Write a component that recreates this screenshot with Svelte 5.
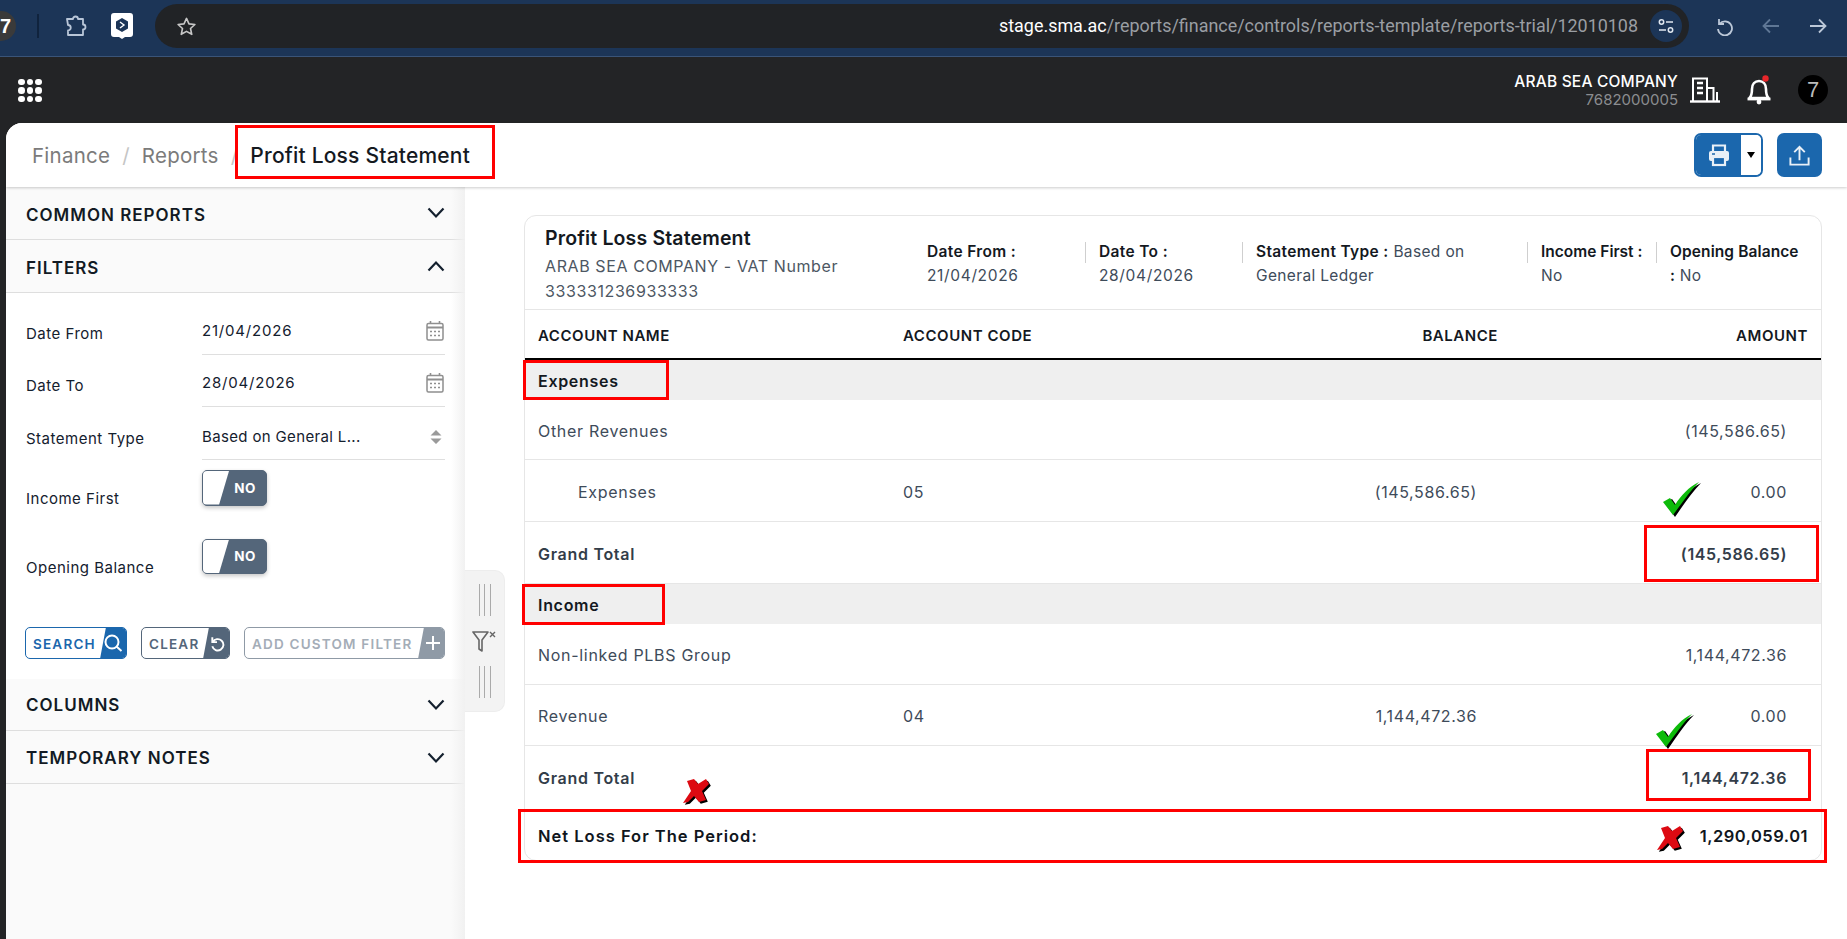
<script>
  const rows1 = [
    { name: 'Other Revenues', code: '', bal: '', amt: '(145,586.65)', h: 'r60' },
    { name: 'Expenses', code: '05', bal: '(145,586.65)', amt: '0.00', h: 'r62', indent: true }
  ];
  const rows2 = [
    { name: 'Non-linked PLBS Group', code: '', bal: '', amt: '1,144,472.36', h: 'r61' },
    { name: 'Revenue', code: '04', bal: '1,144,472.36', amt: '0.00', h: 'r61' }
  ];
  const marks = [
    { x: 235, y: 125, w: 260, h: 54 },
    { x: 523, y: 360, w: 146, h: 40 },
    { x: 1644, y: 525, w: 175, h: 57 },
    { x: 522, y: 584, w: 143, h: 41 },
    { x: 1646, y: 749, w: 165, h: 52 },
    { x: 518, y: 809, w: 1309, h: 54 }
  ];
  const checks = [{ x: 1663, y: 482 }, { x: 1656, y: 714 }];
  const crosses = [{ x: 683, y: 779 }, { x: 1657, y: 826 }];
  const dots = [0, 1, 2];
</script>

{#snippet chev(up)}
  <svg class="chev" viewBox="0 0 18 12" width="18" height="12"><path d={up ? 'M1.500 10.500 9 2.500l7.500 8' : 'M1.500 1.500 9 9.500l7.500-8'} fill="none" stroke="#14202e" stroke-width="2.200"/></svg>
{/snippet}

{#snippet cal()}
  <svg viewBox="0 0 18 20" width="18" height="20"><path d="M4.500 0v3M13.500 0v3" stroke="#8f8f8f" stroke-width="1.600"/><rect x="1" y="2.500" width="16" height="16.500" rx="1.500" fill="none" stroke="#8f8f8f" stroke-width="1.500"/><path d="M1 6.500h16" stroke="#8f8f8f" stroke-width="2"/><path d="M4 10.500h2M8 10.500h2M12 10.500h2M4 14.500h2M8 14.500h2M12 14.500h2" stroke="#8f8f8f" stroke-width="1.600"/></svg>
{/snippet}

{#snippet section(title, up, low)}
  <div class="acc" class:low><span>{title}</span>{@render chev(up)}</div>
{/snippet}

{#snippet toggle()}
  <div class="toggle"><i></i><b>NO</b></div>
{/snippet}

{#snippet row(r)}
  <div class="row {r.h}">
    <span class:indent={r.indent}>{r.name}</span><span>{r.code}</span><span class="num">{r.bal}</span><span class="num">{r.amt}</span>
  </div>
{/snippet}

<div class="app">
  <header class="chrome">
    <div class="chip">7</div>
    <div class="sep"></div>
    <svg class="ext" viewBox="0 0 24 24" width="24" height="24"><path d="M4 4h6a2.500 2.500 0 0 1 5 0h5v5.500a2.500 2.500 0 0 1 0 5V20H5v-4.500a2.500 2.500 0 0 0 0-5.500z" transform="translate(0 1)" fill="none" stroke="#b9c6d8" stroke-width="1.800" stroke-linejoin="round"/></svg>
    <svg class="logo" viewBox="0 0 22 26" width="22" height="26"><path d="M3 0h16a3 3 0 0 1 3 3v18a3 3 0 0 1-3 3h-5l-3 2-3-2H3a3 3 0 0 1-3-3V3a3 3 0 0 1 3-3z" fill="#fff"/><path d="M11 5l6 3.500v7L11 19l-6-3.500v-7z" fill="#1c3557"/><path d="M9 9l4 3-4 3" fill="none" stroke="#fff" stroke-width="1.400"/></svg>
    <div class="pill">
      <svg class="star" viewBox="0 0 22 22" width="21" height="21"><path d="M11 2.500l2.600 5.700 6.200.7-4.600 4.200 1.300 6.100L11 16.100l-5.500 3.100 1.300-6.100-4.600-4.200 6.200-.7z" fill="none" stroke="#c7c7c7" stroke-width="1.700" stroke-linejoin="round"/></svg>
      <div class="url"><span class="host">stage.sma.ac</span><span class="path">/reports/finance/controls/reports-template/reports-trial/12010108</span></div>
      <div class="tune"><svg viewBox="0 0 18 18" width="18" height="18"><circle cx="4.500" cy="5" r="2.200" fill="none" stroke="#dfe6ef" stroke-width="1.500"/><path d="M9 5h7M2 13h7" stroke="#dfe6ef" stroke-width="1.500"/><circle cx="13.500" cy="13" r="2.200" fill="none" stroke="#dfe6ef" stroke-width="1.500"/></svg></div>
    </div>
    <div class="navbtns">
      <svg viewBox="0 0 20 20" width="20" height="20"><path d="M5 3v5h5M5.500 8A7 7 0 1 1 4 13" fill="none" stroke="#bcc8d8" stroke-width="1.800"/></svg>
      <svg viewBox="0 0 20 20" width="20" height="20"><path d="M18 10H3M9 3.500 2.500 10 9 16.500" fill="none" stroke="#5f7795" stroke-width="1.800"/></svg>
      <svg viewBox="0 0 20 20" width="20" height="20"><path d="M2 10h15M11 3.500l6.500 6.500-6.500 6.500" fill="none" stroke="#bcc8d8" stroke-width="1.800"/></svg>
    </div>
  </header>

  <nav class="topnav">
    <div class="apps">{#each dots as a}{#each dots as b}<i></i>{/each}{/each}</div>
    <div class="user">
      <div class="co"><strong>ARAB SEA COMPANY</strong><small>7682000005</small></div>
      <svg class="bld" viewBox="0 0 30 26" width="30" height="26"><path d="M3 24V1.500h14V24M17 11h6.500v13M27 15v9" fill="none" stroke="#fff" stroke-width="2"/><path d="M0 24.500h30" stroke="#fff" stroke-width="2.400"/><path d="M7 6h6M7 11h6M7 16h6" stroke="#fff" stroke-width="2.400"/></svg>
      <svg class="bell" viewBox="0 0 26 30" width="26" height="30"><path d="M3.500 23c2.500-2.500 2.500-5 2.500-9 0-5 3-8 7-8s7 3 7 8c0 4 0 6.500 2.500 9z" fill="none" stroke="#fff" stroke-width="2.600" stroke-linejoin="round"/><path d="M1.500 24h23" stroke="#fff" stroke-width="2.800"/><circle cx="13" cy="27" r="2.400" fill="#fff"/><circle cx="19.500" cy="3.500" r="3.200" fill="#e8262a"/></svg>
      <div class="avatar">7</div>
    </div>
  </nav>

  <div class="shell">
    <div class="crumbs">
      <div class="trail"><span>Finance</span><em>/</em><span>Reports</span><em>/</em><strong>Profit Loss Statement</strong></div>
      <div class="actions">
        <div class="print">
          <div class="pa"><svg viewBox="0 0 24 24" width="24" height="24"><path d="M6 8V2.500h12V8" fill="none" stroke="#e9f0f7" stroke-width="2.200"/><rect x="2" y="8" width="20" height="10" rx="2" fill="#e9f0f7"/><rect x="6" y="14" width="12" height="8" fill="#1b67ad" stroke="#e9f0f7" stroke-width="2.200"/><path d="M5 11h3" stroke="#1b67ad" stroke-width="1.600"/></svg></div>
          <div class="pb"><i></i></div>
        </div>
        <div class="upload"><svg viewBox="0 0 24 24" width="23" height="25"><path d="M12 17V3M6.500 8.500 12 3l5.500 5.500M2.500 14v7.500h19V14" fill="none" stroke="#e9f0f7" stroke-width="2"/></svg></div>
      </div>
    </div>

    <div class="body">
      <aside>
        {@render section('COMMON REPORTS', false, false)}
        {@render section('FILTERS', true, false)}
        <div class="form">
          <div class="field"><label>Date From</label><div class="val date"><span>21/04/2026</span>{@render cal()}</div></div>
          <div class="field"><label>Date To</label><div class="val date"><span>28/04/2026</span>{@render cal()}</div></div>
          <div class="field tall"><label>Statement Type</label><div class="val"><span>Based on General L...</span><svg class="sort" viewBox="0 0 12 14" width="12" height="14"><path d="M6 0l5.500 5.500H.5zM6 14 .5 8.500h11z" fill="#9a9a9a"/></svg></div></div>
          <div class="tfield"><label>Income First</label>{@render toggle()}</div>
          <div class="tfield"><label>Opening Balance</label>{@render toggle()}</div>
          <div class="btns">
            <div class="btn blue"><span>SEARCH</span><i><svg viewBox="0 0 20 20" width="20" height="20"><circle cx="9" cy="9" r="6.500" fill="none" stroke="#fff" stroke-width="2"/><path d="M13.500 13.500l5 4.500" stroke="#fff" stroke-width="2"/></svg></i></div>
            <div class="btn slate"><span>CLEAR</span><i><svg viewBox="0 0 18 18" width="17" height="17"><path d="M3.500 2.500v5h5M4 7.500A6 6 0 1 1 3.500 12" fill="none" stroke="#fff" stroke-width="2"/></svg></i></div>
            <div class="btn grey"><span>ADD CUSTOM FILTER</span><i><svg viewBox="0 0 16 16" width="16" height="16"><path d="M8 1v14M1 8h14" stroke="#fff" stroke-width="2"/></svg></i></div>
          </div>
        </div>
        {@render section('COLUMNS', false, true)}
        {@render section('TEMPORARY NOTES', false, true)}
      </aside>

      <div class="split">
        <div class="grip"><i></i><i></i><i></i></div>
        <svg viewBox="0 0 25 23" width="25" height="23"><path d="M1 2h15l-6 8v11l-3-2v-9z" fill="none" stroke="#666" stroke-width="1.600" stroke-linejoin="round"/><path d="M18 2l5 5M23 2l-5 5" stroke="#666" stroke-width="1.400"/></svg>
        <div class="grip"><i></i><i></i><i></i></div>
      </div>

      <main>
        <section class="card">
          <div class="meta">
            <div class="lead"><h2>Profit Loss Statement</h2><p>ARAB SEA COMPANY - VAT Number<br>333331236933333</p></div>
            <div class="mi w1"><b>Date From :</b><br><span class="d">21/04/2026</span></div>
            <div class="mi w2 dv"><b>Date To :</b><br><span class="d">28/04/2026</span></div>
            <div class="mi w3 dv"><b>Statement Type :</b> Based on<br>General Ledger</div>
            <div class="mi w4 dv"><b>Income First :</b><br>No</div>
            <div class="mi w5 dv"><b>Opening Balance</b><br><b>:</b> No</div>
          </div>
          <div class="row thead"><span>ACCOUNT NAME</span><span>ACCOUNT CODE</span><span class="num">BALANCE</span><span class="num">AMOUNT</span></div>
          <div class="band">Expenses</div>
          {#each rows1 as r}{@render row(r)}{/each}
          <div class="row total r62"><span>Grand Total</span><span></span><span></span><span class="num">(145,586.65)</span></div>
          <div class="band">Income</div>
          {#each rows2 as r}{@render row(r)}{/each}
          <div class="row total r62 last"><span>Grand Total</span><span></span><span></span><span class="num">1,144,472.36</span></div>
          <div class="row net"><span>Net Loss For The Period:</span><span></span><span></span><span class="num">1,290,059.01</span></div>
        </section>
      </main>
    </div>
  </div>

  {#each marks as m}
    <div class="mark" style="left:{m.x}px;top:{m.y}px;width:{m.w}px;height:{m.h}px"></div>
  {/each}
  {#each checks as c}
    <svg class="anno" style="left:{c.x}px;top:{c.y}px" viewBox="0 0 38 35" width="38" height="35"><path d="M1 20l7-4 5 7C19 13 27 5 37 0 28 9 20 21 11 34z" fill="#000" transform="translate(1 1)"/><path d="M0 20l7-4 5 7C18 13 26 5 36 0 27 9 19 21 10 33z" fill="#0dbb0a"/></svg>
  {/each}
  {#each crosses as c}
    <svg class="anno" style="left:{c.x}px;top:{c.y}px" viewBox="0 0 28 26" width="28" height="26"><path d="M1 25 9 13 5 3l7-2 4 5 8-5 3 5-7 7 4 9-7 2-5-6-6 6z" fill="#000" transform="translate(.8 .8)"/><path d="M0 24 8 12 4 2l7-2 4 5 8-5 3 5-7 7 4 9-7 2-5-6-6 6z" fill="#dd0a12"/></svg>
  {/each}
</div>

<style>
  :global(body) { margin: 0; background: #232426; }
  .app { position: relative; width: 1847px; height: 939px; overflow: hidden; display: flex; flex-direction: column; background: #232426; font-family: Inter, "Noto Sans", sans-serif; color: #14202e; }

  .chrome { flex: 0 0 57px; box-sizing: border-box; height: 57px; background: #1c3557; border-bottom: 1px solid #3a5478; display: flex; align-items: center; padding-bottom: 4px; }
  .chip { width: 16px; height: 30px; background: #3a3a3a; border-radius: 0 15px 15px 0; color: #fff; font: 700 20px/30px "Liberation Sans", sans-serif; }
  .sep { width: 2px; height: 24px; background: #10233d; margin-left: 21px; }
  .ext { margin-left: 24px; }
  .logo { margin-left: 24px; }
  .pill { margin-left: 22px; width: 1534px; height: 44px; box-sizing: border-box; background: #212326; border-radius: 22px; display: flex; align-items: center; padding: 0 7px 0 21px; }
  .url { margin-left: auto; font: 17.930px/24px Roboto, sans-serif; white-space: nowrap; }
  .host { color: #fff; }
  .path { color: #9a9ea3; }
  .tune { width: 32px; height: 32px; margin-left: 12px; border-radius: 50%; background: #1c3557; display: flex; align-items: center; justify-content: center; }
  .star { flex: none; }
  .navbtns { display: flex; gap: 27px; margin-left: 25px; }

  .topnav { flex: 0 0 66px; display: flex; align-items: center; justify-content: space-between; padding: 0 19px 0 18px; }
  .apps { display: grid; grid-template-columns: repeat(3, 6.500px); gap: 2px; margin-top: 1px; }
  .apps i { width: 6.500px; height: 6.500px; border-radius: 50%; background: #fff; }
  .user { display: flex; align-items: center; }
  .co { display: flex; flex-direction: column; align-items: flex-end; margin-right: -1px; padding-top: 1px; }
  .co strong { font-weight: 500; font-size: 15.500px; line-height: 18px; color: #fff; letter-spacing: .2px; }
  .co small { font-size: 15px; line-height: 18px; color: #8b8d90; }
  .bld { margin-left: 13px; }
  .bell { margin-left: 26px; }
  .avatar { margin-left: 26px; width: 30px; height: 30px; border-radius: 50%; background: #000; color: #bbb; font: 22px/30px "Liberation Sans", sans-serif; text-align: center; }

  .shell { flex: 1; min-height: 0; margin-left: 6px; background: #fff; border-radius: 16px 0 0 0; display: flex; flex-direction: column; }
  .crumbs { position: relative; z-index: 2; flex: 0 0 64px; display: flex; align-items: center; justify-content: space-between; padding: 0 25px 0 26px; background: #fff; border-radius: 16px 0 0 0; box-shadow: 0 1px 3px rgba(0,0,0,.2); }
  .trail { display: flex; align-items: center; font-size: 20.500px; letter-spacing: .25px; color: #7b7b7b; }
  .trail em { font-style: normal; color: #c5c5c5; margin: 0 12px; }
  .trail strong { font-weight: 500; font-size: 21px; letter-spacing: .2px; color: #14191f; margin-left: 0; }
  .actions { display: flex; gap: 14px; }
  .print { display: flex; width: 69px; height: 44px; box-sizing: border-box; border: 2px solid #1b67ad; border-radius: 7px; overflow: hidden; }
  .pa { width: 45px; background: #1b67ad; display: flex; align-items: center; justify-content: center; }
  .pb { flex: 1; background: #fff; display: flex; align-items: center; justify-content: center; }
  .pb i { border: 4.500px solid transparent; border-top: 6px solid #000; border-bottom: 0; }
  .upload { width: 45px; height: 44px; border-radius: 7px; background: #1b67ad; display: flex; align-items: center; justify-content: center; }

  .body { flex: 1; min-height: 0; display: flex; }
  aside { position: relative; flex: 0 0 459px; background: #fafafa; }
  aside::after { content: ""; position: absolute; top: 0; right: 0; bottom: 0; width: 14px; background: linear-gradient(90deg, rgba(240,240,240,0), #f1f1f1); pointer-events: none; }
  .acc { height: 53px; box-sizing: border-box; border-bottom: 1.500px solid #dedede; display: flex; align-items: center; justify-content: space-between; padding: 3px 20px 0 20px; font-weight: 600; font-size: 17px; letter-spacing: 1px; color: #121a24; }
  .acc.low { height: 52px; padding-top: 0; }
  .acc.low:last-child { height: 53px; padding-top: 1px; }
  .chev { flex: none; margin-top: -4px; }
  .acc.low .chev { margin-top: 0; }
  .form { background: #fff; padding: 10px 20px 0; height: 386px; box-sizing: border-box; }
  .field { display: grid; grid-template-columns: 176px 243px; height: 52px; font-size: 15px; letter-spacing: .5px; }
  .field.tall { height: 53px; }
  .field label { padding-top: 21px; line-height: 20px; }
  .field.tall label { padding-top: 22px; }
  .val { border-bottom: 1.500px solid #dfdfdf; display: flex; justify-content: space-between; align-items: flex-start; padding: 18px 1px 0 0; line-height: 20px; letter-spacing: .35px; box-sizing: border-box; }
  .field.tall .val { padding-top: 20px; }
  .val.date { letter-spacing: .8px; }
  .val .sort { margin: 3px 2px 0 0; }
  .tfield { display: grid; grid-template-columns: 176px 243px; height: 68.500px; font-size: 15px; letter-spacing: .5px; padding-top: 10px; box-sizing: border-box; }
  .tfield label { padding-top: 19px; line-height: 20px; }
  .toggle { position: relative; width: 65px; height: 35.500px; box-sizing: border-box; background: #54667a; border: 1px solid #54667a; border-radius: 5px; box-shadow: 0 2px 4px rgba(0,0,0,.22); display: flex; align-items: center; justify-content: flex-end; padding-right: 10px; overflow: hidden; }
  .toggle i { position: absolute; left: 0; top: 0; bottom: 0; width: 26px; background: #fff; clip-path: polygon(0 0, 100% 0, 62% 100%, 0 100%); }
  .toggle b { color: #fff; font-size: 13.500px; font-weight: 700; letter-spacing: .5px; }
  .btns { display: flex; gap: 14px; margin: 30px 0 0 -1px; width: 420px; }
  .btn { position: relative; height: 32px; box-sizing: border-box; border: 1px solid; border-radius: 5px; display: flex; align-items: center; padding: 1px 0 0 7px; font-size: 13.500px; font-weight: 600; letter-spacing: 1.200px; overflow: hidden; white-space: nowrap; }
  .btn i { position: absolute; top: -1px; right: -1px; bottom: -1px; width: 27px; display: flex; align-items: center; justify-content: flex-end; padding-right: 4px; box-sizing: border-box; clip-path: polygon(6px 0, 100% 0, 100% 100%, 0 100%); }
  .blue { width: 102px; color: #1b67ad; border-color: #1b67ad; }
  .blue i { background: #1b67ad; }
  .slate { width: 89px; color: #54667a; border-color: #54667a; }
  .slate i { background: #54667a; }
  .grey { width: 201px; color: #a4adb7; border-color: #8f9aa6; }
  .grey i { background: #8f9aa6; }

  .split { flex: 0 0 40px; height: 142px; box-sizing: border-box; margin-top: 383px; background: #f3f3f3; border: 1px solid #ededed; border-left: 0; border-radius: 0 10px 10px 0; display: flex; flex-direction: column; align-items: center; justify-content: space-between; padding: 13px 0; }
  .grip { display: flex; gap: 4.500px; height: 32px; }
  .grip i { width: 1px; background: #aaa; }

  main { flex: 1; min-width: 0; padding: 28px 25px 0 19px; background: #fff; }
  .card { box-sizing: border-box; height: 646px; border: 1.500px solid #e6e6e6; border-radius: 12px; }
  .meta { display: flex; height: 93px; border-bottom: 1.500px solid #e6e6e6; font-size: 15.500px; line-height: 24px; letter-spacing: .35px; color: #3e4b5a; }
  .lead { flex: 0 0 402px; box-sizing: border-box; padding: 9px 0 0 20px; letter-spacing: 0; }
  .lead h2 { margin: 0 0 3px; font-size: 19.500px; line-height: 26px; font-weight: 600; letter-spacing: .15px; color: #14191f; }
  .lead p { margin: 0; font-size: 16px; line-height: 25px; letter-spacing: .6px; color: #4d5763; }
  .mi { position: relative; box-sizing: border-box; padding: 24px 0 0 14px; white-space: nowrap; }
  .mi b { font-weight: 600; color: #14191f; }
  .mi .d { letter-spacing: .65px; }
  .mi.w1 { flex: 0 0 158px; padding-left: 0; }
  .w2 { flex: 0 0 157px; }
  .w3 { flex: 0 0 285px; }
  .w4 { flex: 0 0 129px; }
  .w4 b { letter-spacing: 0; }
  .w5 { flex: 1; }
  .w5 b { letter-spacing: .1px; }
  .dv::before { content: ""; position: absolute; left: 0; top: 26px; height: 21px; width: 1px; background: #cfcfcf; }

  .row { display: grid; grid-template-columns: 365px 200px 1fr 310px; align-items: center; padding: 2px 34px 0 13px; box-sizing: border-box; font-size: 16px; letter-spacing: .7px; color: #3e4b5a; border-bottom: 1.500px solid #e6e6e6; }
  .num { text-align: right; letter-spacing: .6px; }
  .thead { height: 50px; padding-right: 13px; border-bottom: 2px solid #000; font-size: 15px; letter-spacing: .55px; font-weight: 600; color: #14191f; }
  .thead .num { letter-spacing: .55px; }
  .band { height: 40px; box-sizing: border-box; background: #efefef; padding: 2px 0 0 13px; display: flex; align-items: center; font-size: 16px; letter-spacing: .7px; font-weight: 600; color: #14191f; }
  .r60 { height: 60px; }
  .r61 { height: 61px; }
  .r62 { height: 62px; }
  .indent { padding-left: 40px; }
  .total { font-weight: 600; color: #333d49; }
  .total.last { height: 62px; border-bottom: 0; }
  .net { height: 54px; border-bottom: 0; padding-right: 13px; font-size: 16.500px; letter-spacing: 1px; font-weight: 600; color: #10161d; }
  .net .num { letter-spacing: .5px; }

  .mark { position: absolute; box-sizing: border-box; border: 3px solid #f00; z-index: 5; }
  .anno { position: absolute; z-index: 6; }
</style>
